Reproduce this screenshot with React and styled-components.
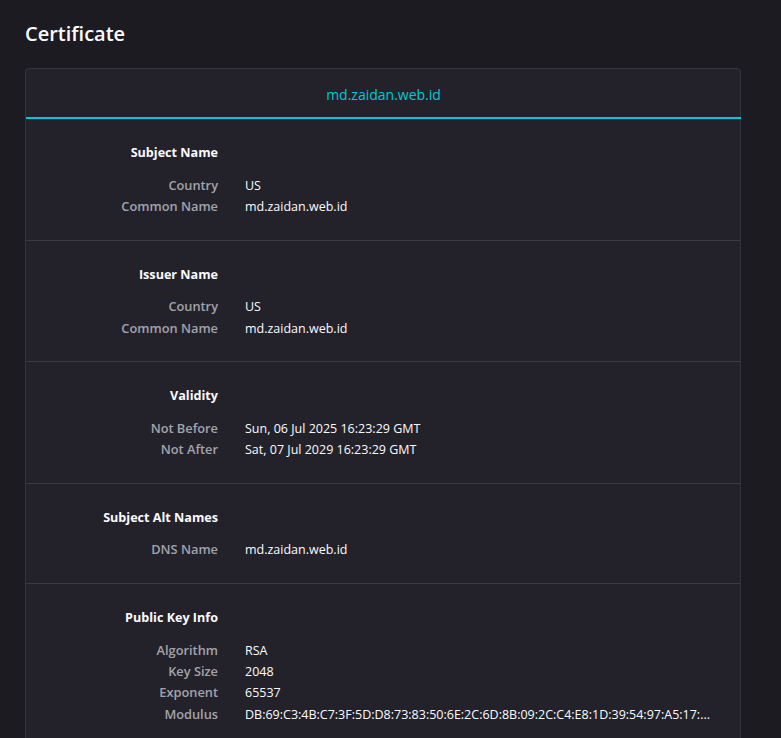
import React from "react";
import styled, { createGlobalStyle } from "styled-components";

const sections = [
  {
    title: "Subject Name",
    rows: [
      ["Country", "US"],
      ["Common Name", "md.zaidan.web.id"],
    ],
  },
  {
    title: "Issuer Name",
    rows: [
      ["Country", "US"],
      ["Common Name", "md.zaidan.web.id"],
    ],
  },
  {
    title: "Validity",
    rows: [
      ["Not Before", "Sun, 06 Jul 2025 16:23:29 GMT"],
      ["Not After", "Sat, 07 Jul 2029 16:23:29 GMT"],
    ],
  },
  {
    title: "Subject Alt Names",
    rows: [["DNS Name", "md.zaidan.web.id"]],
  },
  {
    title: "Public Key Info",
    rows: [
      ["Algorithm", "RSA"],
      ["Key Size", "2048"],
      ["Exponent", "65537"],
      ["Modulus", "DB:69:C3:4B:C7:3F:5D:D8:73:83:50:6E:2C:6D:8B:09:2C:C4:E8:1D:39:54:97:A5:17:..."],
    ],
  },
];

export default function App() {
  return (
    <>
      <GlobalStyle />
      <Page>
        <Title>Certificate</Title>
        <Card>
          <Tab>md.zaidan.web.id</Tab>
          {sections.map((section) => (
            <Section key={section.title}>
              <Heading>{section.title}</Heading>
              {section.rows.map(([label, value]) => (
                <Row key={label}>
                  <Label>{label}</Label>
                  <Value>{value}</Value>
                </Row>
              ))}
            </Section>
          ))}
        </Card>
      </Page>
    </>
  );
}

const GlobalStyle = createGlobalStyle`
  html,
  body {
    margin: 0;
    height: 100%;
    overflow: hidden;
    background: #1c1b22;
  }
`;

const Page = styled.main`
  padding: 20px 40px 0 25px;
  font-family: "Open Sans", "Noto Sans", sans-serif;
  font-size: 13px;
  color: #fbfbfe;
`;

const Title = styled.h1`
  margin: 0 0 20px;
  font-size: 20px;
  line-height: 28px;
  font-weight: 600;
`;

const Card = styled.div`
  width: 716px;
  box-sizing: border-box;
  background: #23222b;
  border: 1px solid #35343d;
  border-radius: 4px;
`;

const Tab = styled.div`
  height: 48px;
  line-height: 51px;
  text-align: center;
  font-size: 14px;
  color: #00c8d7;
  border-bottom: 2px solid #00c8d7;
  margin-right: -1px;
`;

const Section = styled.section`
  padding: 23px 0 22.25px;
  border-bottom: 1px solid #3a3944;
`;

const Heading = styled.h2`
  margin: 0 0 11.7px;
  width: 192px;
  text-align: right;
  font-size: 12.6px;
  line-height: 21px;
  font-weight: 700;
`;

const Row = styled.div`
  display: grid;
  grid-template-columns: 192px 1fr;
  column-gap: 27px;
  line-height: 21.33px;
`;

const Label = styled.span`
  text-align: right;
  font-size: 12.8px;
  font-weight: 600;
  color: #a3a3ab;
`;

const Value = styled.span`
  font-size: 12.5px;
`;
